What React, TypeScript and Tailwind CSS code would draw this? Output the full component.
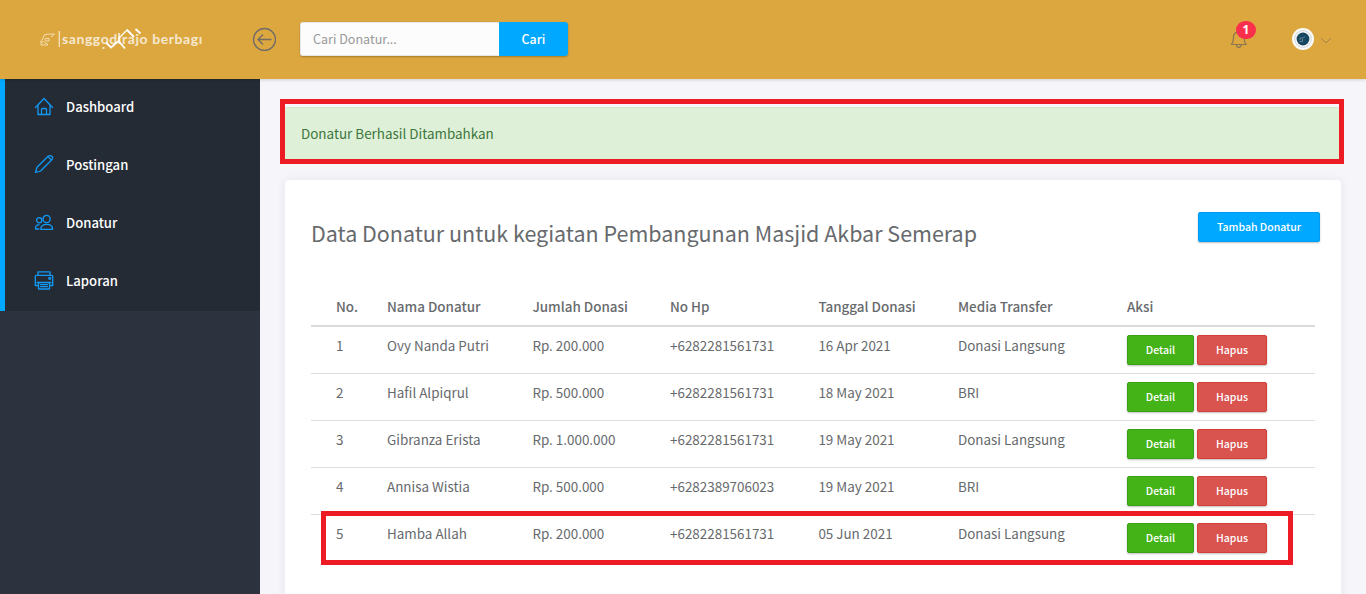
import type { ReactNode } from "react";

type Donor = { name: string; amount: string; phone: string; date: string; media: string };

const donors: Donor[] = [
  { name: "Ovy Nanda Putri", amount: "Rp. 200.000", phone: "+6282281561731", date: "16 Apr 2021", media: "Donasi Langsung" },
  { name: "Hafil Alpiqrul", amount: "Rp. 500.000", phone: "+6282281561731", date: "18 May 2021", media: "BRI" },
  { name: "Gibranza Erista", amount: "Rp. 1.000.000", phone: "+6282281561731", date: "19 May 2021", media: "Donasi Langsung" },
  { name: "Annisa Wistia", amount: "Rp. 500.000", phone: "+6282389706023", date: "19 May 2021", media: "BRI" },
  { name: "Hamba Allah", amount: "Rp. 200.000", phone: "+6282281561731", date: "05 Jun 2021", media: "Donasi Langsung" },
];

const columns = "grid grid-cols-[51px_145.4px_137.6px_148.4px_139.6px_169px_1fr] pl-[25px]";

function Icon({ children }: { children: ReactNode }) {
  return (
    <svg className="size-5 shrink-0" viewBox="0 0 20 20" fill="none" stroke="#1199f5" strokeWidth="1.3" strokeLinejoin="round" strokeLinecap="round">
      {children}
    </svg>
  );
}

const HomeIcon = () => (
  <Icon>
    <path d="M1.5 10.5 L10 1.5 L18.5 10.5" />
    <path d="M4 8.5 V17.5 H16 V8.5 M7.5 17.5 V12.5 Q7.5 11.5 8.5 11.5 H11.5 Q12.5 11.5 12.5 12.5 V17.5" />
  </Icon>
);

const PencilIcon = () => (
  <Icon>
    <path d="M1.5 17.5 L3 12.3 L14.3 1 Q15.6 0.4 17 0.8 Q18.8 1.2 18.6 3 Q18.5 4.2 17.8 4.8 L6.6 16 Z M14 1.6 L17.4 5" />
  </Icon>
);

const UsersIcon = () => (
  <Icon>
    <circle cx="12.6" cy="6" r="3.6" />
    <circle cx="5.2" cy="7.2" r="2.6" />
    <path d="M6.8 16.3 Q6.8 11.4 12.7 11.4 Q18.6 11.4 18.6 16.3 Z M5 16 H1.5 Q1.2 12.2 5 11.7" />
  </Icon>
);

const PrinterIcon = () => (
  <Icon>
    <path d="M4 4.2 V0.9 H16 V4.2 M4 14.5 H1.3 V5.4 Q1.3 4.4 2.3 4.4 H17.7 Q18.7 4.4 18.7 5.4 V14.5 H16" />
    <path d="M3 11.5 H17 M4.5 11.5 V18 H15.5 V11.5 M6.5 13.6 H13.5 M6.5 15.7 H13.5" />
    <circle cx="15.7" cy="7.3" r="1" />
  </Icon>
);

const menu: { label: string; icon: ReactNode }[] = [
  { label: "Dashboard", icon: <HomeIcon /> },
  { label: "Postingan", icon: <PencilIcon /> },
  { label: "Donatur", icon: <UsersIcon /> },
  { label: "Laporan", icon: <PrinterIcon /> },
];

function Logo() {
  return (
    <div className="relative flex h-6 w-[164px] items-center text-[#f5e8cf]">
      <svg className="h-[18px] w-[23px] shrink-0" viewBox="0 0 23 18" fill="none" stroke="#f5e3be" strokeWidth="0.9">
        <path d="M4 8 Q4 4.5 8 4.2 L15.5 4 L12 7 M7 8 Q5 9.5 7 11 H10 V8.5 H7 M2 10.5 V15 H9 M2 12.5 L4.5 11.5 L9 14.5 M4 8 L3 10.5" />
        <path d="M20.3 1 V17" strokeWidth="1.3" />
      </svg>
      <span className="whitespace-nowrap pb-px font-['Lato'] text-[14px] font-bold leading-5 tracking-[0.58px]">sanggodırajo berbagı</span>
      <svg className="absolute left-[62px] top-0 h-6 w-[42px]" viewBox="0 0 42 24" fill="none" stroke="#fff" strokeWidth="1.9">
        <path d="M5 15.5 L10 20.5 L17.5 14 L24 21.5 M25.5 2.5 L33 10 M34.5 2 L39.5 6.5" />
        <path d="M18 6 V14.5 M1.5 21 H3.5 M17 12 L25.5 3.5" strokeWidth="1.3" />
      </svg>
    </div>
  );
}

function Header() {
  return (
    <header className="relative z-10 flex h-[79px] shrink-0 items-center bg-[#dca73f] pb-px pl-[39px] shadow-[0_1px_3px_rgba(0,0,0,0.15)]">
      <Logo />
      <svg className="ml-[49px] size-6" viewBox="0 0 24 24" fill="none" stroke="#736d66" strokeWidth="1.4">
        <circle cx="12.5" cy="12.5" r="11" />
        <path d="M19.5 12.5 H6 M11 7.5 L6 12.5 L11 17.5" />
      </svg>
      <form className="ml-6 flex h-[34px] w-[268px] rounded-[3px] shadow-[0_1px_2px_rgba(0,0,0,0.25)]">
        <input
          className="h-full w-[199px] rounded-l-[3px] border border-r-0 border-[#e4e8ea] bg-[#fcfcfc] px-3 pb-0.5 text-[12.55px] text-gray-600 placeholder:text-[#999] outline-none"
          placeholder="Cari Donatur..."
        />
        <button type="button" className="flex-1 rounded-r-[3px] bg-[#00a8ff] text-[12.4px] font-medium text-white">Cari</button>
      </form>
      <div className="relative ml-[660px] h-7 w-7">
        <svg className="absolute left-0.5 top-[5px] h-[19px] w-[18px]" viewBox="0 0 18 19" fill="none" stroke="#8a7350" strokeWidth="1.2">
          <path d="M1 14.5 Q3 13.5 3.3 10 L3.6 6 Q4.3 2 8.8 1.8 Q13.3 2 14 6 L14.3 10 Q14.6 13.5 16.6 14.5 Z M6.5 14.8 Q6.5 17.3 8.8 17.3 Q11.1 17.3 11.1 14.8" />
        </svg>
        <span className="absolute -top-1 left-2 flex h-[18px] w-5 items-center justify-center rounded-full bg-[#fa2f4c] font-['Open_Sans'] text-[12px] font-bold leading-none text-white">1</span>
      </div>
      <svg className="ml-9 size-[22px]" viewBox="0 0 22 22">
        <circle cx="11" cy="11" r="11" fill="#fafafa" />
        <circle cx="11" cy="11" r="8.3" fill="none" stroke="#d8dddf" strokeWidth="1.2" />
        <circle cx="11" cy="11" r="6.4" fill="#174760" />
        <path d="M8 12 V10 H11 L13 8.5 M7.5 13.5 H10.5 V11" fill="none" stroke="#7593a2" strokeWidth="0.8" />
      </svg>
      <svg className="ml-[6px] mt-0.5 h-[7px] w-3" viewBox="0 0 12 7" fill="none" stroke="#a18350" strokeWidth="1">
        <path d="M1 1 L6 6 L11 1" />
      </svg>
    </header>
  );
}

function Sidebar() {
  return (
    <aside className="w-[260px] shrink-0 bg-[#2c323e]">
      <nav className="border-l-[5px] border-[#00a8ff] bg-[#252b35]">
        {menu.map((item) => (
          <a key={item.label} className="flex h-[58px] items-center gap-3 pb-0.5 pl-[29px] text-[13.1px] font-medium text-white">
            {item.icon}
            {item.label}
          </a>
        ))}
      </nav>
    </aside>
  );
}

function ActionButton({ label, tone }: { label: string; tone: string }) {
  return (
    <button type="button" className={"h-[30px] rounded-[2px] border text-[10.5px] font-medium text-white shadow-[0_1px_2px_rgba(0,0,0,0.25)] " + tone}>
      {label}
    </button>
  );
}

function DonorTable() {
  return (
    <div className="mt-[43px]">
      <div className={columns + " h-[35px] border-b-2 border-[#d9dadb] pt-1 font-medium leading-5"}>
        <span>No.</span>
        <span>Nama Donatur</span>
        <span>Jumlah Donasi</span>
        <span>No Hp</span>
        <span>Tanggal Donasi</span>
        <span>Media Transfer</span>
        <span>Aksi</span>
      </div>
      {donors.map((d, i) => (
        <div key={i} className={columns + " h-[47px] border-b border-[#dcddde] pt-2 leading-5 last:border-transparent"}>
          <span>{i + 1}</span>
          <span>{d.name}</span>
          <span>{d.amount}</span>
          <span>{d.phone}</span>
          <span>{d.date}</span>
          <span>{d.media}</span>
          <div className="flex gap-[3px]">
            <ActionButton label="Detail" tone="w-[67px] border-[#38a116] bg-[#43b318]" />
            <ActionButton label="Hapus" tone="w-[70px] border-[#d43f3a] bg-[#d9534f]" />
          </div>
        </div>
      ))}
    </div>
  );
}

export default function App() {
  return (
    <div className="flex h-[594px] w-[1366px] flex-col overflow-hidden bg-[#f5f5fa] font-['Noto_Sans_CJK_JP',sans-serif] text-[13.43px] text-[#676a6d]">
      <Header />
      <div className="flex min-h-0 flex-1">
        <Sidebar />
        <main className="flex min-w-0 flex-1 flex-col pl-5 pt-5">
          <div className="h-[65px] w-[1064px] shrink-0 border-[5px] border-[#ed1c24] pt-[3px]">
            <div className="flex h-[52px] items-center rounded-t-[3px] border-t border-[#d3e6c8] bg-[#dff0d8] pl-4 text-[#3c763d]">
              Donatur Berhasil Ditambahkan
            </div>
          </div>
          <section className="relative ml-[5px] mt-4 h-[500px] w-[1056px] shrink-0 rounded-[4px] bg-white pl-[26px] pr-[26px] pt-8 shadow-[0_0_10px_rgba(40,40,70,0.08)]">
            <div className="-mr-[5px] flex items-start justify-between">
              <h1 className="pt-[5px] text-[21.49px] leading-8">Data Donatur untuk kegiatan Pembangunan Masjid Akbar Semerap</h1>
              <ActionButton label="Tambah Donatur" tone="w-[122px] border-[#009cf0] bg-[#00a8ff]" />
            </div>
            <DonorTable />
            <div className="pointer-events-none absolute left-9 top-[331px] h-[54px] w-[972px] border-[5px] border-[#ed1c24]" />
          </section>
        </main>
      </div>
    </div>
  );
}
